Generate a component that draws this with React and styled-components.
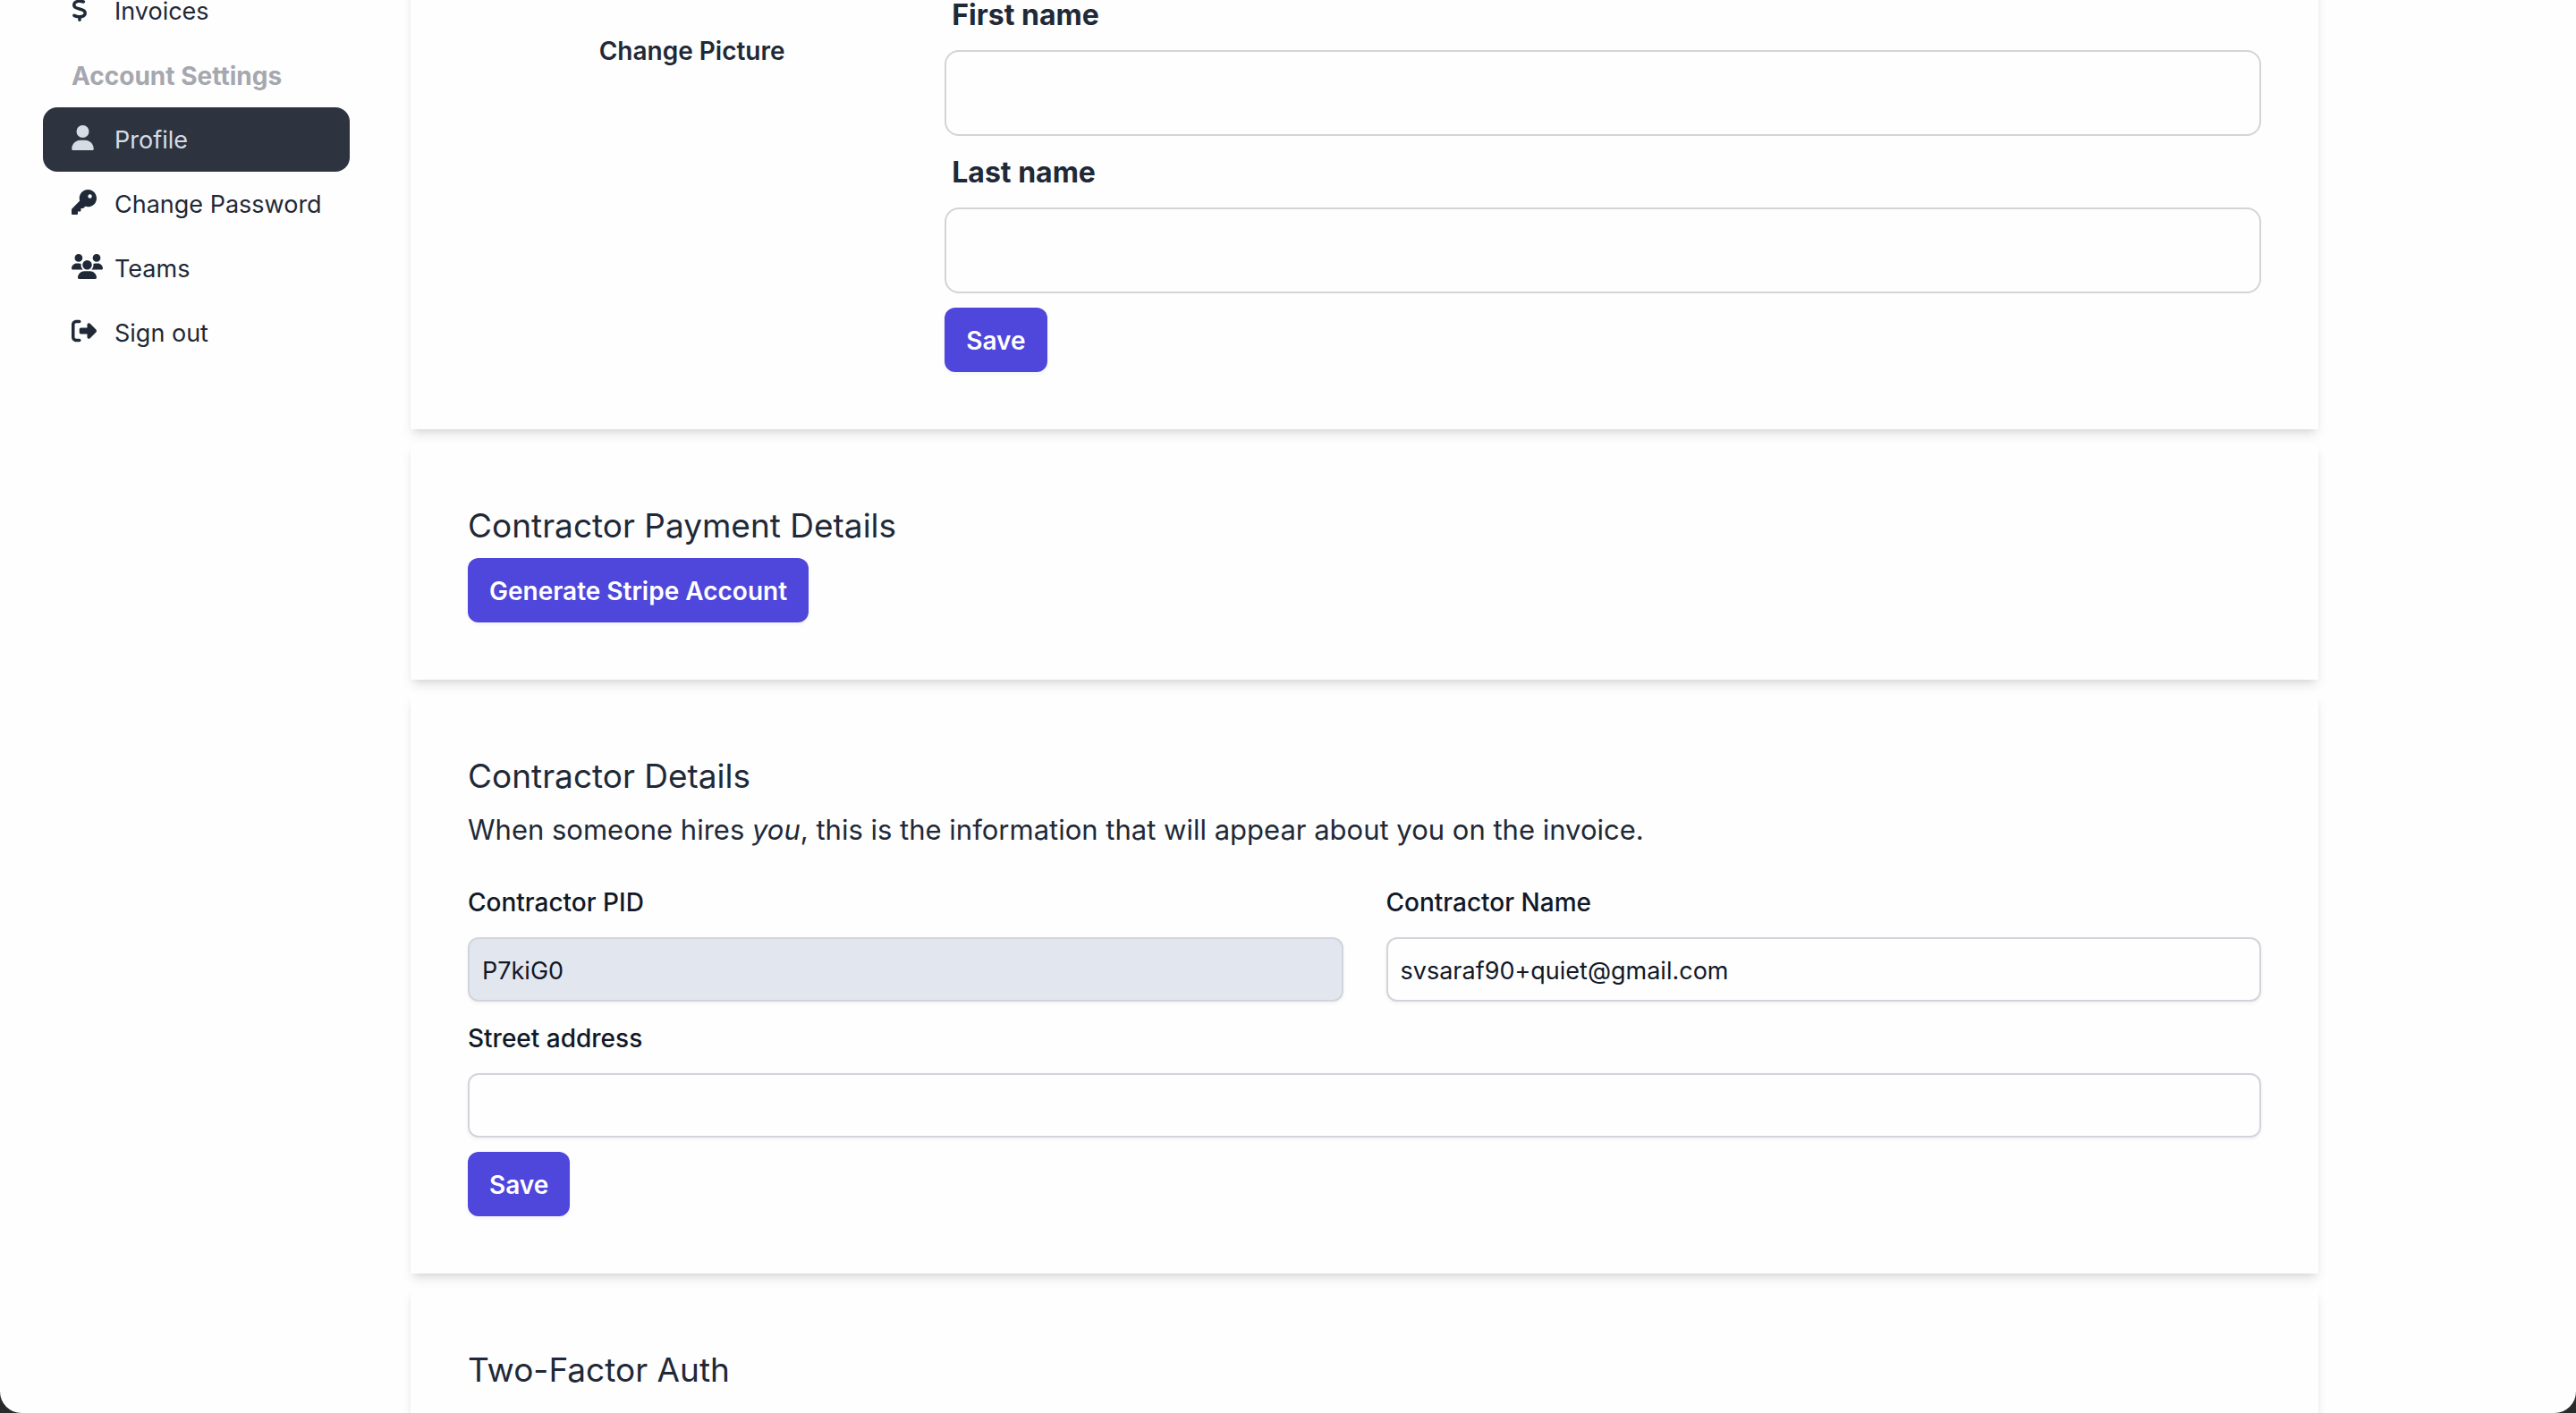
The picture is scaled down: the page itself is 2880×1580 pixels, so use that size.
import React from "react";
import styled, { createGlobalStyle } from "styled-components";
import {
  FaDollarSign,
  FaUser,
  FaKey,
  FaUsers,
  FaRightFromBracket,
} from "react-icons/fa6";

const GlobalStyle = createGlobalStyle`
  *, *::before, *::after { box-sizing: border-box; }
  body {
    margin: 0;
    background: #2a2a2b;
    color: #1f2937;
    font-family: Inter, "Liberation Sans", sans-serif;
    font-size: 28px;
    line-height: 40px;
  }
  button, input { font: inherit; }
`;

const Window = styled.div`
  height: 100vh;
  overflow: hidden;
  background: #fefefe;
  border-radius: 0 0 24px 24px;
`;

/* The page rests partly scrolled, with the first card's top out of view. */
const Page = styled.div`
  display: flex;
  margin-top: -88px;
  padding-right: 10%;
`;

const Sidebar = styled.nav`
  flex: 0 0 459px;
  padding: 64px 68px 0 48px;
`;

const Menu = styled.ul`
  margin: 0;
  padding: 0;
  list-style: none;
`;

const MenuTitle = styled.li`
  padding: 17px 32px 15px;
  color: #a5a8ae;
  font-weight: 700;
`;

const MenuLink = styled.a`
  display: flex;
  align-items: center;
  padding: 17px 0 15px 32px;
  border-radius: 16px;
  background: ${(p) => (p.$active ? "#2d333f" : "transparent")};
  color: ${(p) => (p.$active ? "#d7dce4" : "#1f2937")};
  font-size: 27px;
  text-decoration: none;
  white-space: nowrap;
`;

const MenuIcon = styled.span`
  flex: 0 0 48px;
  padding-bottom: 6px;

  svg {
    display: block;
    width: ${(p) => p.$width}px;
    height: 28px;
  }
`;

const Main = styled.main`
  flex: 1;
  min-width: 0;
  display: flex;
  flex-direction: column;
  gap: 16px;
`;

const Card = styled.section`
  padding: 64px;
  background: #fefefe;
  box-shadow: 0 8px 12px -2px rgba(0, 0, 0, 0.1),
    0 4px 8px -4px rgba(0, 0, 0, 0.1);
`;

const ProfileRow = styled.div`
  display: flex;
`;

const PictureColumn = styled.div`
  flex: 0 0 25%;
  display: flex;
  flex-direction: column;
  align-items: center;
  padding-top: 44px;
`;

const TextButton = styled.button`
  padding: 17px 24px 15px;
  border: 0;
  background: none;
  color: #1f2937;
  font-weight: 600;
`;

const NameForm = styled.form`
  flex: 1;
  padding-left: 32px;
`;

const NameLabel = styled.label`
  display: block;
  padding: 17px 8px 15px;
  font-size: 32px;
  line-height: 48px;
  font-weight: 700;
`;

const NameInput = styled.input`
  display: block;
  width: 100%;
  height: 96px;
  margin-bottom: ${(p) => (p.$last ? "16px" : "0")};
  padding: 0 32px;
  border: 2px solid #d4d4d8;
  border-radius: 16px;
  background: #fefefe;
  outline: none;
`;

const Button = styled.button`
  display: block;
  padding: 17px 24px 15px;
  border: 0;
  border-radius: 12px;
  background: #4f46dc;
  color: #fff;
  font-weight: 600;
  line-height: 40px;
  box-shadow: 0 2px 4px rgba(0, 0, 0, 0.05);
`;

const Heading = styled.h2`
  margin: 0 0 8px;
  font-size: 37px;
  line-height: 56px;
  font-weight: 400;
`;

const Lead = styled.p`
  margin: 0 0 32px;
  font-size: 31px;
  line-height: 48px;
`;

const FieldGrid = styled.form`
  display: grid;
  grid-template-columns: 1fr 1fr;
  gap: 16px 48px;
`;

const Field = styled.div`
  grid-column: ${(p) => (p.$wide ? "1 / -1" : "auto")};
`;

const FieldLabel = styled.label`
  display: block;
  padding: 1px 0 15px;
  color: #111827;
  font-weight: 500;
  line-height: 48px;
`;

const FieldInput = styled.input`
  display: block;
  width: 100%;
  height: 72px;
  padding: 2px 14px 0;
  border: 2px solid #d1d5db;
  border-radius: 12px;
  background: #fefefe;
  color: #111827;
  font-size: 27px;
  box-shadow: 0 2px 4px rgba(0, 0, 0, 0.05);
  outline: none;

  &:read-only {
    background: #e2e6ee;
  }
`;

const Actions = styled.div`
  grid-column: 1 / -1;
`;

const accountLinks = [
  { label: "Profile", icon: FaUser, iconWidth: 25, active: true },
  { label: "Change Password", icon: FaKey, iconWidth: 28 },
  { label: "Teams", icon: FaUsers, iconWidth: 35 },
  { label: "Sign out", icon: FaRightFromBracket, iconWidth: 28 },
];

function MenuItem({ label, icon: Icon, iconWidth, active }) {
  return (
    <li>
      <MenuLink href="#" $active={active} aria-current={active ? "page" : undefined}>
        <MenuIcon aria-hidden="true" $width={iconWidth}>
          <Icon />
        </MenuIcon>
        {label}
      </MenuLink>
    </li>
  );
}

export default function App() {
  return (
    <>
      <GlobalStyle />
      <Window>
        <Page>
          <Sidebar>
            <Menu>
              <MenuItem label="Invoices" icon={FaDollarSign} iconWidth={18} />
              <MenuTitle>Account Settings</MenuTitle>
              {accountLinks.map((link) => (
                <MenuItem key={link.label} {...link} />
              ))}
            </Menu>
          </Sidebar>

          <Main>
            <Card>
              <ProfileRow>
                <PictureColumn>
                  <TextButton type="button">Change Picture</TextButton>
                </PictureColumn>
                <NameForm>
                  <NameLabel htmlFor="first-name">First name</NameLabel>
                  <NameInput id="first-name" type="text" />
                  <NameLabel htmlFor="last-name">Last name</NameLabel>
                  <NameInput id="last-name" type="text" $last />
                  <Button type="button">Save</Button>
                </NameForm>
              </ProfileRow>
            </Card>

            <Card>
              <Heading>Contractor Payment Details</Heading>
              <Button type="button">Generate Stripe Account</Button>
            </Card>

            <Card>
              <Heading>Contractor Details</Heading>
              <Lead>
                When someone hires <em>you</em>, this is the information that
                will appear about you on the invoice.
              </Lead>
              <FieldGrid>
                <Field>
                  <FieldLabel htmlFor="contractor-pid">Contractor PID</FieldLabel>
                  <FieldInput id="contractor-pid" type="text" defaultValue="P7kiG0" readOnly />
                </Field>
                <Field>
                  <FieldLabel htmlFor="contractor-name">Contractor Name</FieldLabel>
                  <FieldInput
                    id="contractor-name"
                    type="text"
                    defaultValue="svsaraf90+quiet@gmail.com"
                  />
                </Field>
                <Field $wide>
                  <FieldLabel htmlFor="street-address">Street address</FieldLabel>
                  <FieldInput id="street-address" type="text" />
                </Field>
                <Actions>
                  <Button type="button">Save</Button>
                </Actions>
              </FieldGrid>
            </Card>

            <Card>
              <Heading>Two-Factor Auth</Heading>
            </Card>
          </Main>
        </Page>
      </Window>
    </>
  );
}
